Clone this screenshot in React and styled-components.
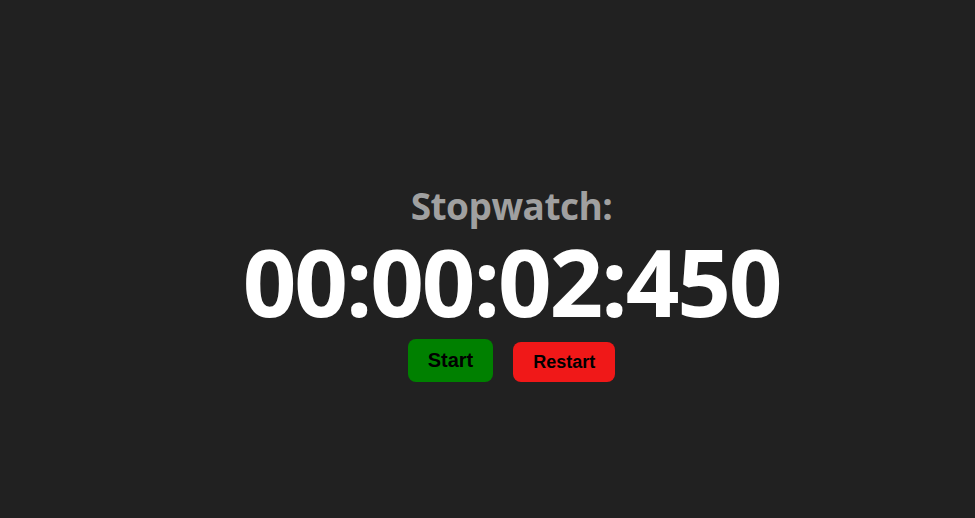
import React from "react";
import styled, { createGlobalStyle } from "styled-components";

const Global = createGlobalStyle`
  html, body { margin: 0; padding: 0; background: #212121; }
  body { font-family: "Open Sans", "Noto Sans", sans-serif; }
`;

const Page = styled.main`
  min-height: 100vh;
  display: flex;
  flex-direction: column;
  align-items: center;
  justify-content: flex-start;
  padding: 180px 0 0 48px;
  box-sizing: border-box;
`;

const Title = styled.h2`
  margin: 0;
  font-family: "Open Sans", "Noto Sans", sans-serif;
  font-weight: 700;
  font-size: 37px;
  line-height: 52px;
  color: #a0a0a0;
  letter-spacing: -0.5px;
`;

const Time = styled.h1`
  margin: 0;
  font-family: "Open Sans", "Noto Sans", sans-serif;
  font-weight: 700;
  font-size: 94px;
  line-height: 98px;
  color: #ffffff;
  letter-spacing: -2.2px;
`;

const Controls = styled.div`
  display: flex;
  align-items: flex-end;
  gap: 20px;
  margin-top: 9px;
`;

const Button = styled.button`
  border: none;
  border-radius: 8px;
  background: ${(p) => p.$bg};
  color: #000;
  font-family: "Liberation Sans", Arial, sans-serif;
  font-weight: 700;
  font-size: ${(p) => p.$size}px;
  line-height: normal;
  padding: ${(p) => p.$pad};
  cursor: pointer;
`;

export default function App() {
  return (
    <>
      <Global />
      <Page>
        <Title>Stopwatch:</Title>
        <Time>00:00:02:450</Time>
        <Controls>
          <Button $bg="#008000" $size={20} $pad="10px 20px 10px">Start</Button>
          <Button $bg="#f01818" $size={18} $pad="10px 20px 9px">Restart</Button>
        </Controls>
      </Page>
    </>
  );
}
